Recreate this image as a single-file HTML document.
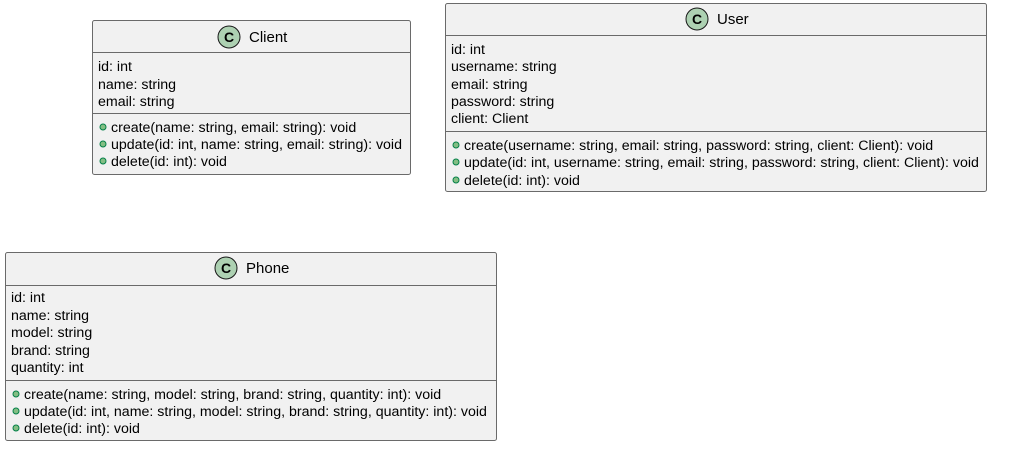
<!DOCTYPE html>
<html><head><style>body{margin:0;background:#fff}svg{display:block}text{font-family:"Liberation Sans",sans-serif;font-size:14.2px;fill:#000}</style></head><body>
<svg width="1012" height="468" xmlns="http://www.w3.org/2000/svg">
<!-- Client -->
<rect x="92.5" y="20.5" width="318" height="154" rx="2" fill="#F1F1F1" stroke="#6a6a6a"/>
<line x1="92.5" y1="52.5" x2="410.5" y2="52.5" stroke="#6a6a6a"/>
<line x1="92.5" y1="113.5" x2="410.5" y2="113.5" stroke="#6a6a6a"/>
<circle cx="229" cy="37" r="11" fill="#ADD1B2" stroke="#181818"/>
<text x="229" y="42" text-anchor="middle" style="font-weight:bold;font-size:14px">C</text>
<text x="249" y="42" style="font-size:15px">Client</text>
<text x="98" y="71">id: int</text>
<text x="98" y="89">name: string</text>
<text x="98" y="106">email: string</text>
<circle cx="103" cy="127" r="3" fill="#84BE84" stroke="#038048"/><text x="111" y="132">create(name: string, email: string): void</text>
<circle cx="103" cy="144" r="3" fill="#84BE84" stroke="#038048"/><text x="111" y="149">update(id: int, name: string, email: string): void</text>
<circle cx="103" cy="161" r="3" fill="#84BE84" stroke="#038048"/><text x="111" y="166">delete(id: int): void</text>
<!-- User -->
<rect x="445.5" y="3.5" width="541" height="188" rx="2" fill="#F1F1F1" stroke="#6a6a6a"/>
<line x1="445.5" y1="35.5" x2="986.5" y2="35.5" stroke="#6a6a6a"/>
<line x1="445.5" y1="131.5" x2="986.5" y2="131.5" stroke="#6a6a6a"/>
<circle cx="697" cy="19" r="11" fill="#ADD1B2" stroke="#181818"/>
<text x="697" y="24" text-anchor="middle" style="font-weight:bold;font-size:14px">C</text>
<text x="717" y="24" style="font-size:15px">User</text>
<text x="451" y="54">id: int</text>
<text x="451" y="71">username: string</text>
<text x="451" y="89">email: string</text>
<text x="451" y="106">password: string</text>
<text x="451" y="123">client: Client</text>
<circle cx="456" cy="145" r="3" fill="#84BE84" stroke="#038048"/><text x="464" y="150">create(username: string, email: string, password: string, client: Client): void</text>
<circle cx="456" cy="162" r="3" fill="#84BE84" stroke="#038048"/><text x="464" y="167">update(id: int, username: string, email: string, password: string, client: Client): void</text>
<circle cx="456" cy="180" r="3" fill="#84BE84" stroke="#038048"/><text x="464" y="185">delete(id: int): void</text>
<!-- Phone -->
<rect x="5.5" y="252.5" width="491" height="188" rx="2" fill="#F1F1F1" stroke="#6a6a6a"/>
<line x1="5.5" y1="285.5" x2="496.5" y2="285.5" stroke="#6a6a6a"/>
<line x1="5.5" y1="380.5" x2="496.5" y2="380.5" stroke="#6a6a6a"/>
<circle cx="226" cy="268" r="11" fill="#ADD1B2" stroke="#181818"/>
<text x="226" y="273" text-anchor="middle" style="font-weight:bold;font-size:14px">C</text>
<text x="246" y="273" style="font-size:15px">Phone</text>
<text x="11" y="302">id: int</text>
<text x="11" y="320">name: string</text>
<text x="11" y="337">model: string</text>
<text x="11" y="355">brand: string</text>
<text x="11" y="372">quantity: int</text>
<circle cx="16" cy="394" r="3" fill="#84BE84" stroke="#038048"/><text x="24" y="399">create(name: string, model: string, brand: string, quantity: int): void</text>
<circle cx="16" cy="411" r="3" fill="#84BE84" stroke="#038048"/><text x="24" y="416">update(id: int, name: string, model: string, brand: string, quantity: int): void</text>
<circle cx="16" cy="428" r="3" fill="#84BE84" stroke="#038048"/><text x="24" y="433">delete(id: int): void</text>
</svg>
</body></html>
